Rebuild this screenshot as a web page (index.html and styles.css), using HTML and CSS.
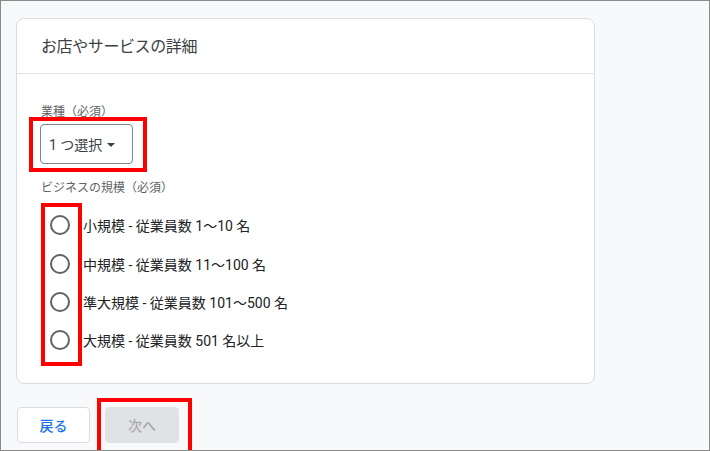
FILE: index.html
```html
<!DOCTYPE html>
<html lang="ja">
<head>
<meta charset="utf-8">
<title>お店やサービスの詳細</title>
<link rel="stylesheet" href="styles.css">
</head>
<body>
<div class="frame">
  <section class="card">
    <header class="card-header">お店やサービスの詳細</header>
    <div class="card-body">
      <div class="field-label">業種（必須）</div>
      <button class="select" type="button">
        <span class="select-text">1 つ選択</span>
        <span class="select-arrow"></span>
      </button>
      <div class="field-label field-label-second">ビジネスの規模（必須）</div>
      <div class="radio-group">
        <label class="radio-row"><span class="radio"><span class="radio-circle"></span></span><span class="radio-text">小規模 - 従業員数 1～10 名</span></label>
        <label class="radio-row"><span class="radio"><span class="radio-circle"></span></span><span class="radio-text">中規模 - 従業員数 11～100 名</span></label>
        <label class="radio-row"><span class="radio"><span class="radio-circle"></span></span><span class="radio-text">準大規模 - 従業員数 101～500 名</span></label>
        <label class="radio-row"><span class="radio"><span class="radio-circle"></span></span><span class="radio-text">大規模 - 従業員数 501 名以上</span></label>
      </div>
    </div>
  </section>
  <div class="actions">
    <button class="btn btn-back" type="button">戻る</button>
    <button class="btn btn-next" type="button" disabled>次へ</button>
  </div>
  <div class="mark mark-select"></div>
  <div class="mark mark-radios"></div>
  <div class="mark mark-next"></div>
</div>
</body>
</html>
```
FILE: styles.css
```css
html, body {
  margin: 0;
  padding: 0;
}
body {
  font-family: Roboto, "Noto Sans CJK JP", sans-serif;
  color: #202124;
}
.frame {
  position: relative;
  box-sizing: border-box;
  width: 710px;
  height: 451px;
  border: 1px solid #8a8a8a;
  background: #f8f9fa;
  padding: 17px 0 0 15px;
  overflow: hidden;
}
.card {
  box-sizing: border-box;
  width: 579px;
  background: #fff;
  border: 1px solid #dadce0;
  border-radius: 8px;
}
.card-header {
  height: 55px;
  display: flex;
  align-items: center;
  padding: 0 24px 2px;
  box-sizing: border-box;
  font-size: 16px;
  letter-spacing: -0.4px;
  color: #3c4043;
  border-bottom: 1px solid #e3e3e3;
}
.card-body {
  padding: 30px 23px 23px;
}
.field-label {
  font-size: 12px;
  line-height: 16px;
  color: #5f6368;
  padding-left: 1px;
}
.field-label-second {
  margin-top: 16px;
}
.select {
  margin-top: 4px;
  box-sizing: border-box;
  width: 93px;
  height: 40px;
  display: flex;
  align-items: center;
  padding: 0 0 0 8px;
  background: #fff;
  border: 1px solid #80868b;
  border-radius: 4px;
  font-family: inherit;
  font-size: 14px;
  color: #3c4043;
}
.select-arrow {
  width: 0;
  height: 0;
  margin-left: 5px;
  margin-top: 1px;
  border-left: 4px solid transparent;
  border-right: 4px solid transparent;
  border-top: 4px solid #3c4043;
}
.radio-group {
  margin-top: 10px;
  display: flex;
  flex-direction: column;
}
.radio-row {
  height: 38.4px;
  display: flex;
  align-items: center;
  font-size: 14px;
  color: #202124;
}
.radio {
  width: 40px;
  height: 38px;
  display: flex;
  align-items: center;
  justify-content: center;
}
.radio-circle {
  box-sizing: border-box;
  width: 20px;
  height: 20px;
  border: 2px solid #5f6368;
  border-radius: 50%;
}
.radio-text {
  margin-left: 3px;
}
.actions {
  display: flex;
  gap: 15px;
  margin-top: 23px;
  padding-left: 1px;
}
.btn {
  box-sizing: border-box;
  height: 36px;
  padding: 0;
  display: flex;
  align-items: center;
  justify-content: center;
  white-space: nowrap;
  border-radius: 4px;
  font-family: inherit;
  font-size: 14px;
  font-weight: 500;
}
.btn-back {
  width: 73px;
  background: #fff;
  border: 1px solid #dadce0;
  color: #1a73e8;
}
.btn-next {
  width: 74px;
  background: #e1e2e3;
  border: 1px solid #e1e2e3;
  color: #a8abae;
}
.mark {
  position: absolute;
  box-sizing: border-box;
  border: 4px solid #ff0000;
}
.mark-select {
  left: 28px;
  top: 116px;
  width: 118px;
  height: 55px;
}
.mark-radios {
  left: 40px;
  top: 202px;
  width: 41px;
  height: 163px;
}
.mark-next {
  left: 96px;
  top: 397px;
  width: 95px;
  height: 60px;
}
```
